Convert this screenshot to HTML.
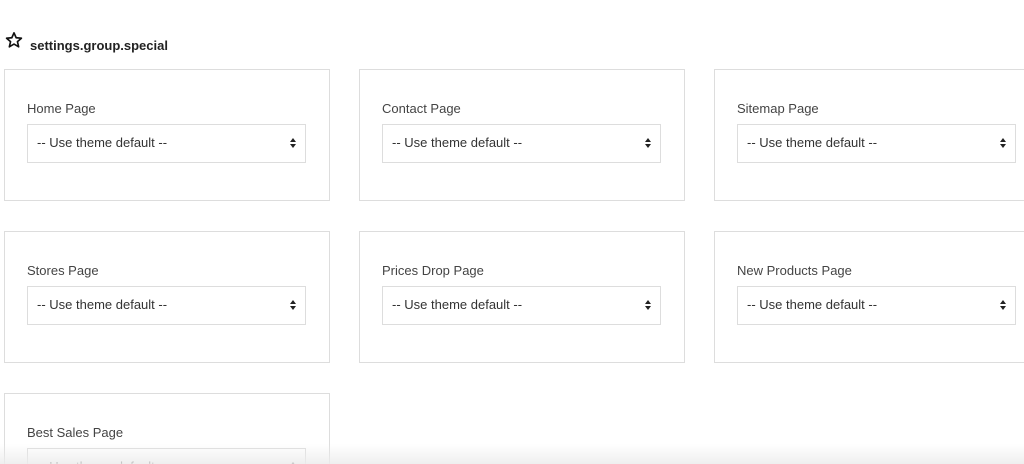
<!DOCTYPE html>
<html style="overflow:hidden;height:464px"><head><style>
body{margin:0;width:1024px;height:464px;overflow:hidden;background:#fff;font-family:"Liberation Sans",sans-serif;position:relative}
.t{position:absolute;left:30px;top:38px;font-size:13px;font-weight:bold;color:#222}
.b{position:absolute;width:326px;height:132px;border:1px solid #ddd;box-sizing:border-box}
.l{position:absolute;left:22px;top:31px;font-size:13px;color:#444}
.s{position:absolute;left:22px;top:54px;width:279px;height:39px;border:1px solid #ddd;box-sizing:border-box;font-size:13px;color:#333;padding:10px 0 0 9px}
.s:after{content:"";position:absolute;right:9px;top:13px;border:3.5px solid transparent;border-bottom:4px solid #222;border-top:0}
.s:before{content:"";position:absolute;right:9px;top:19px;border:3.5px solid transparent;border-top:4px solid #222;border-bottom:0}
.f{position:absolute;left:0;right:0;top:444px;height:20px;background:linear-gradient(rgba(240,240,240,0),rgba(236,236,236,.85))}
</style></head><body>
<svg style="position:absolute;left:5px;top:31px" width="18" height="18" viewBox="0 0 24 24"><path d="M12 2.5l2.9 6.5 7 .6-5.3 4.6 1.6 6.9L12 17.4l-6.2 3.7 1.6-6.9L2.1 9.6l7-.6z" fill="none" stroke="#111" stroke-width="2.2" stroke-linejoin="round"/></svg>
<div class="t">settings.group.special</div>
<div class="b" style="left:4px;top:69px"><div class="l">Home Page</div><div class="s">-- Use theme default --</div></div>
<div class="b" style="left:359px;top:69px"><div class="l">Contact Page</div><div class="s">-- Use theme default --</div></div>
<div class="b" style="left:714px;top:69px"><div class="l">Sitemap Page</div><div class="s">-- Use theme default --</div></div>
<div class="b" style="left:4px;top:231px"><div class="l">Stores Page</div><div class="s">-- Use theme default --</div></div>
<div class="b" style="left:359px;top:231px"><div class="l">Prices Drop Page</div><div class="s">-- Use theme default --</div></div>
<div class="b" style="left:714px;top:231px"><div class="l">New Products Page</div><div class="s">-- Use theme default --</div></div>
<div class="b" style="left:4px;top:393px;height:71px;border-bottom:0;overflow:hidden"><div class="l">Best Sales Page</div><div class="s">-- Use theme default --</div></div>
<div class="f"></div>
</body></html>
